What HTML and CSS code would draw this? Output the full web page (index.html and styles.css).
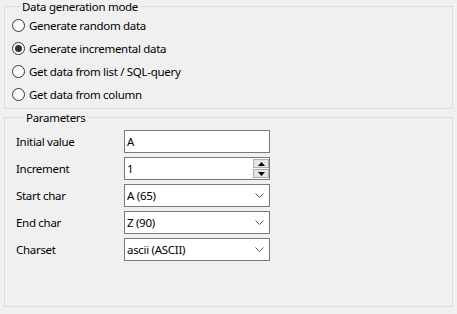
FILE: index.html
```html
<!DOCTYPE html>
<html>
<head>
<meta charset="utf-8">
<link rel="stylesheet" href="styles.css">
</head>
<body>
<div class="page">
  <fieldset class="group mode">
    <legend>Data generation mode</legend>
    <label class="radio"><span class="circle"></span><span>Generate random data</span></label>
    <label class="radio"><span class="circle checked"></span><span>Generate incremental data</span></label>
    <label class="radio"><span class="circle"></span><span>Get data from list / SQL-query</span></label>
    <label class="radio"><span class="circle"></span><span>Get data from column</span></label>
  </fieldset>
  <fieldset class="group params">
    <legend>Parameters</legend>
    <div class="form">
      <span class="lbl">Initial value</span>
      <div class="field"><span class="val">A</span></div>

      <span class="lbl">Increment</span>
      <div class="field"><span class="val">1</span>
        <div class="spin">
          <span class="sbtn"><svg width="7" height="4" viewBox="0 0 7 4"><polygon points="0,4 7,4 3.5,0" fill="#000"/></svg></span>
          <span class="sbtn"><svg width="7" height="4" viewBox="0 0 7 4"><polygon points="0,0 7,0 3.5,4" fill="#000"/></svg></span>
        </div>
      </div>

      <span class="lbl">Start char</span>
      <div class="field"><span class="val">A (65)</span><svg class="chev" width="9" height="5" viewBox="0 0 9 5"><polyline points="0.5,0.5 4.5,4.5 8.5,0.5" fill="none" stroke="#5a5a5a" stroke-width="1"/></svg></div>

      <span class="lbl">End char</span>
      <div class="field"><span class="val">Z (90)</span><svg class="chev" width="9" height="5" viewBox="0 0 9 5"><polyline points="0.5,0.5 4.5,4.5 8.5,0.5" fill="none" stroke="#5a5a5a" stroke-width="1"/></svg></div>

      <span class="lbl">Charset</span>
      <div class="field"><span class="val">ascii (ASCII)</span><svg class="chev" width="9" height="5" viewBox="0 0 9 5"><polyline points="0.5,0.5 4.5,4.5 8.5,0.5" fill="none" stroke="#5a5a5a" stroke-width="1"/></svg></div>
    </div>
  </fieldset>
</div>
</body>
</html>
```
FILE: styles.css
```css
html, body {
  margin: 0;
  padding: 0;
  background: #f0f0f0;
}
body {
  font-family: "Noto Sans", "Open Sans", sans-serif;
  font-size: 11.5px;
  letter-spacing: -0.3px;
  color: #000;
}
.page {
  padding: 0 4px 0 4px;
  display: flex;
  flex-direction: column;
  gap: 2px;
}
.group {
  margin: 0;
  border: 1px solid #dcdcdc;
  padding: 0;
  min-width: 0;
}
.group legend {
  margin-left: 8px;
  padding: 1px 2px 0 2px;
  line-height: 12px;
  height: 12px;
}
.mode {
  padding: 1px 0 2px 7px;
}
.radio {
  display: flex;
  align-items: center;
  height: 23px;
  gap: 4px;
}
.circle {
  width: 11px;
  height: 11px;
  border: 1px solid #333;
  border-radius: 50%;
  background: #fff;
  display: flex;
  align-items: center;
  justify-content: center;
  flex: none;
}
.circle.checked::after {
  content: "";
  width: 7px;
  height: 7px;
  border-radius: 50%;
  background: #333;
}
.params {
  padding: 6px 0 45px 11px;
}
.form {
  display: grid;
  grid-template-columns: 108px 146px;
  row-gap: 4px;
  align-items: center;
}
.field {
  height: 21px;
  border: 1px solid #7a7a7a;
  background: #fff;
  display: flex;
  align-items: center;
  box-sizing: content-box;
  width: 144px;
}
.val {
  flex: 1;
  padding-left: 2px;
  white-space: nowrap;
}
.spin {
  display: flex;
  flex-direction: column;
  gap: 1px;
  align-self: stretch;
  padding: 1px 0;
}
.sbtn {
  width: 14px;
  background: #e5e5e5;
  border: 1px solid #adadad;
  display: flex;
  align-items: center;
  justify-content: center;
  box-sizing: content-box;
  height: 7px;
}
.chev {
  margin-right: 5px;
  flex: none;
}
```
